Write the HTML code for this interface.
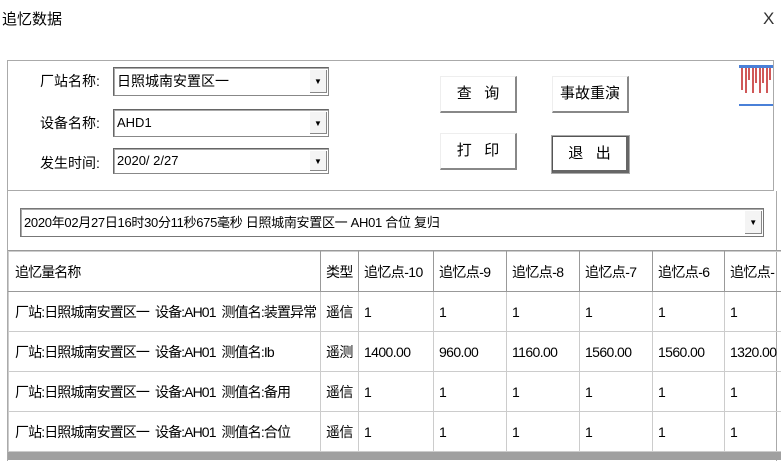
<!DOCTYPE html>
<html><head><meta charset="utf-8"><style>
*{margin:0;padding:0;box-sizing:border-box}
body{width:781px;height:460px;background:#fff;position:relative;overflow:hidden;font-family:"Liberation Sans","Noto Sans CJK SC",sans-serif;color:#000}
.a{position:absolute}
.lbl{font-size:14px}
.combo{position:absolute;left:113px;width:216px;border:1px solid #888;border-top-color:#666;border-left-color:#666;background:#fff;font-size:13px;padding-left:3px;box-shadow:inset 1px 1px 0 #aaa}
.arr{position:absolute;right:1px;top:2px;bottom:2px;width:17px;background:#f4f4f4;border-right:1px solid #888;border-bottom:1px solid #888;font-size:8px;text-align:center}
.btn{position:absolute;width:77px;height:37px;background:#fff;border-right:2px solid #888;border-bottom:2px solid #888;border-top:1px solid #eee;border-left:1px solid #eee;font-size:15px;text-align:center;line-height:34px}
table{border-collapse:collapse;position:absolute;left:8px;top:251px;font-size:14px;table-layout:fixed;width:776px;letter-spacing:-0.6px}
td{border:1px solid #ccc;height:40px;padding-left:5px;white-space:nowrap;overflow:hidden}
td.f{padding-left:6px;letter-spacing:-0.9px}
tr.h td{border-bottom:1px solid #999;border-right:1px solid #999}
</style></head><body>
<div class="a" style="left:2px;top:8px;font-size:15px">追忆数据</div>
<div class="a" style="left:763px;top:9px;font-size:17px;color:#333">X</div>
<div class="a" style="left:7px;top:60px;width:767px;height:131px;border:1px solid #aaa"></div>
<div class="a lbl" style="left:40px;top:71px">厂站名称:</div>
<div class="a lbl" style="left:40px;top:113px">设备名称:</div>
<div class="a lbl" style="left:40px;top:153px">发生时间:</div>
<div class="combo" style="top:67px;height:29px;line-height:26px;font-size:14px">日照城南安置区一<div class="arr" style="line-height:24px">▼</div></div>
<div class="combo" style="top:109px;height:28px;line-height:26px">AHD1<div class="arr" style="line-height:24px">▼</div></div>
<div class="combo" style="top:148px;height:26px;line-height:24px">2020/ 2/27<div class="arr" style="line-height:22px">▼</div></div>
<div class="btn" style="left:440px;top:76px">查&nbsp;&nbsp;&nbsp;询</div>
<div class="btn" style="left:552px;top:76px">事故重演</div>
<div class="btn" style="left:440px;top:133px">打&nbsp;&nbsp;&nbsp;印</div>
<div class="btn" style="left:552px;top:136px;border:1px solid #555;border-right:3px solid #666;border-bottom:3px solid #666;outline:1px solid #aaa">退&nbsp;&nbsp;&nbsp;出</div>
<svg class="a" style="left:739px;top:65px" width="34" height="42">
<rect x="0" y="0" width="34" height="3" fill="#4a80d8"/>
<rect x="0" y="39" width="34" height="2" fill="#4a80d8"/>
<g stroke="#c02020" stroke-width="1.5">
<line x1="3" y1="3" x2="3" y2="25"/><line x1="7" y1="3" x2="7" y2="28"/><line x1="10" y1="3" x2="10" y2="15"/><line x1="14" y1="3" x2="14" y2="28"/><line x1="17" y1="3" x2="17" y2="18"/><line x1="21" y1="3" x2="21" y2="28"/><line x1="24" y1="3" x2="24" y2="18"/><line x1="28" y1="3" x2="28" y2="28"/><line x1="31" y1="3" x2="31" y2="15"/>
</g></svg>
<div class="a" style="left:7px;top:191px;width:770px;height:270px;border-left:1px solid #aaa;border-right:1px solid #aaa"></div>
<div class="a" style="left:20px;top:208px;width:744px;height:29px;border:1px solid #777;box-shadow:inset 1px 1px 0 #aaa;font-size:13px;line-height:27px;padding-left:3px;letter-spacing:-0.3px">2020年02月27日16时30分11秒675毫秒 日照城南安置区一 AH01 合位 复归<div class="arr" style="line-height:24px">▼</div></div>
<div class="a" style="left:8px;top:250px;width:773px;height:1px;background:#999"></div>
<table>
<colgroup><col style="width:312px"><col style="width:38px"><col style="width:75px"><col style="width:73px"><col style="width:73px"><col style="width:73px"><col style="width:72px"><col style="width:60px"></colgroup>
<tr class="h"><td class="f">追忆量名称</td><td>类型</td><td>追忆点-10</td><td>追忆点-9</td><td>追忆点-8</td><td>追忆点-7</td><td>追忆点-6</td><td>追忆点-</td></tr>
<tr><td class="f">厂站:日照城南安置区一&nbsp; 设备:AH01&nbsp; 测值名:装置异常</td><td>遥信</td><td>1</td><td>1</td><td>1</td><td>1</td><td>1</td><td>1</td></tr>
<tr><td class="f">厂站:日照城南安置区一&nbsp; 设备:AH01&nbsp; 测值名:Ib</td><td>遥测</td><td>1400.00</td><td>960.00</td><td>1160.00</td><td>1560.00</td><td>1560.00</td><td>1320.00</td></tr>
<tr><td class="f">厂站:日照城南安置区一&nbsp; 设备:AH01&nbsp; 测值名:备用</td><td>遥信</td><td>1</td><td>1</td><td>1</td><td>1</td><td>1</td><td>1</td></tr>
<tr><td class="f">厂站:日照城南安置区一&nbsp; 设备:AH01&nbsp; 测值名:合位</td><td>遥信</td><td>1</td><td>1</td><td>1</td><td>1</td><td>1</td><td>1</td></tr>
</table>
<div class="a" style="left:8px;top:452px;width:773px;height:8px;background:#a0a0a0"></div>
</body></html>
